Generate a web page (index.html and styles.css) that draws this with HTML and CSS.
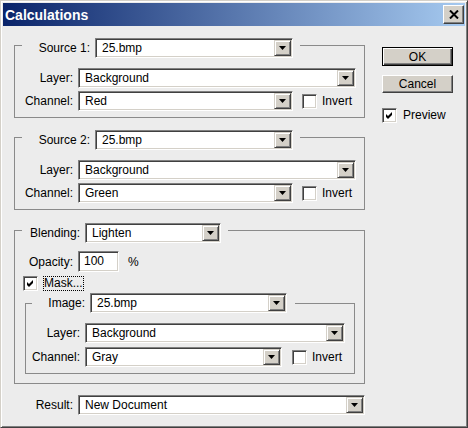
FILE: index.html
```html
<!DOCTYPE html>
<html>
<head>
<meta charset="utf-8">
<title>Calculations</title>
<link rel="stylesheet" href="styles.css">
</head>
<body>
<div class="window">
  <div class="titlebar">
    <span class="title">Calculations</span>
    <span class="close"><svg width="10" height="9" viewBox="0 0 10 9"><path d="M1 0.5 L9 8.5 M9 0.5 L1 8.5" stroke="#000" stroke-width="2"/></svg></span>
  </div>
  <div class="main">
    <div class="left">
      <fieldset class="group g-src">
        <legend class="lg lg-src"><span class="lbl l-src">Source 1:</span><div class="combo w-src"><span class="val">25.bmp</span><span class="dd"><svg width="7" height="4" viewBox="0 0 7 4"><path d="M0 0H7L3.5 4Z"/></svg></span></div></legend>
        <div class="rows">
          <span class="lbl">Layer:</span>
          <div class="combo w-layer"><span class="val">Background</span><span class="dd"><svg width="7" height="4" viewBox="0 0 7 4"><path d="M0 0H7L3.5 4Z"/></svg></span></div>
          <span class="lbl">Channel:</span>
          <div class="line"><div class="combo w-chan"><span class="val">Red</span><span class="dd"><svg width="7" height="4" viewBox="0 0 7 4"><path d="M0 0H7L3.5 4Z"/></svg></span></div><span class="chk"></span><span class="chk-text">Invert</span></div>
        </div>
      </fieldset>

      <fieldset class="group g-src">
        <legend class="lg lg-src"><span class="lbl l-src">Source 2:</span><div class="combo w-src"><span class="val">25.bmp</span><span class="dd"><svg width="7" height="4" viewBox="0 0 7 4"><path d="M0 0H7L3.5 4Z"/></svg></span></div></legend>
        <div class="rows">
          <span class="lbl">Layer:</span>
          <div class="combo w-layer"><span class="val">Background</span><span class="dd"><svg width="7" height="4" viewBox="0 0 7 4"><path d="M0 0H7L3.5 4Z"/></svg></span></div>
          <span class="lbl">Channel:</span>
          <div class="line"><div class="combo w-chan"><span class="val">Green</span><span class="dd"><svg width="7" height="4" viewBox="0 0 7 4"><path d="M0 0H7L3.5 4Z"/></svg></span></div><span class="chk"></span><span class="chk-text">Invert</span></div>
        </div>
      </fieldset>

      <fieldset class="group g-blend">
        <legend class="lg lg-blend"><span class="lbl l-blend">Blending:</span><div class="combo w-blend"><span class="val">Lighten</span><span class="dd"><svg width="7" height="4" viewBox="0 0 7 4"><path d="M0 0H7L3.5 4Z"/></svg></span></div></legend>
        <div class="rows">
          <span class="lbl">Opacity:</span>
          <div class="line"><div class="field w-op">100</div><span class="pct">%</span></div>
        </div>
        <div class="maskrow">
          <span class="chk"><svg width="7" height="7" viewBox="0 0 7 7"><path d="M0 2 L2 4 L6 0 L6 3 L2 7 L0 5 Z"/></svg></span>
          <span class="focus">Mask...</span>
        </div>
        <fieldset class="group g-inner">
          <legend class="lg lg-img"><span class="lbl l-img">Image:</span><div class="combo w-img"><span class="val">25.bmp</span><span class="dd"><svg width="7" height="4" viewBox="0 0 7 4"><path d="M0 0H7L3.5 4Z"/></svg></span></div></legend>
          <div class="rows rows-in">
            <span class="lbl">Layer:</span>
            <div class="combo w-ilayer"><span class="val">Background</span><span class="dd"><svg width="7" height="4" viewBox="0 0 7 4"><path d="M0 0H7L3.5 4Z"/></svg></span></div>
            <span class="lbl">Channel:</span>
            <div class="line line-in"><div class="combo w-ichan"><span class="val">Gray</span><span class="dd"><svg width="7" height="4" viewBox="0 0 7 4"><path d="M0 0H7L3.5 4Z"/></svg></span></div><span class="chk"></span><span class="chk-text">Invert</span></div>
          </div>
        </fieldset>
      </fieldset>

      <div class="rows result">
        <span class="lbl">Result:</span>
        <div class="combo w-result"><span class="val">New Document</span><span class="dd"><svg width="7" height="4" viewBox="0 0 7 4"><path d="M0 0H7L3.5 4Z"/></svg></span></div>
      </div>
    </div>

    <div class="right">
      <div class="pbtn def">OK</div>
      <div class="pbtn cancel">Cancel</div>
      <div class="chkrow">
        <span class="chk"><svg width="7" height="7" viewBox="0 0 7 7"><path d="M0 2 L2 4 L6 0 L6 3 L2 7 L0 5 Z"/></svg></span>
        <span class="chk-text">Preview</span>
      </div>
    </div>
  </div>
</div>
</body>
</html>
```

FILE: styles.css
```css
* { box-sizing: border-box; }
html, body { margin: 0; padding: 0; }
body {
  background: #ececec;
  font-family: "Liberation Sans", Arial, sans-serif;
  font-size: 12px;
  color: #000;
}
.window {
  width: 468px;
  height: 428px;
  background: #ececec;
  border: 1px solid;
  border-color: #d4d0c8 #404040 #404040 #d4d0c8;
  box-shadow: inset 1px 1px 0 #fff, inset -1px -1px 0 #808080;
  padding: 2px;
  display: flex;
  flex-direction: column;
}
.titlebar {
  height: 23px;
  flex: none;
  display: flex;
  align-items: center;
  justify-content: space-between;
  padding: 0 1px 0 2px;
  background: linear-gradient(90deg, #0a246a, #a6caf0);
}
.title {
  color: #fff;
  font-weight: bold;
  font-size: 14px;
}
.close {
  width: 21px;
  height: 19px;
  background: #d4d0c8;
  border: 1px solid;
  border-color: #fff #404040 #404040 #fff;
  box-shadow: inset -1px -1px 0 #808080;
  display: flex;
  align-items: center;
  justify-content: center;
}
.main {
  display: flex;
  align-items: flex-start;
  padding: 12px 0 0 11px;
}
.left {
  width: 351px;
  display: flex;
  flex-direction: column;
}
.right {
  width: 71px;
  margin-left: 17px;
  margin-top: 9px;
  display: flex;
  flex-direction: column;
}

/* group boxes */
.group {
  margin: 0 0 12px 0;
  padding: 15px 0 6px 0;
  border: 1px solid #8a8a8a;
  min-width: 0;
}
.g-blend {
  margin-top: 1px;
  margin-bottom: 11px;
  padding: 13px 0 9px 0;
}
.g-inner {
  margin: 2px 0 0 10px;
  width: 330px;
  padding: 10px 0 6px 0;
}
.lg {
  display: flex;
  align-items: flex-start;
  height: 15px;
  margin-left: 7px;
  padding: 0 7px 0 15px;
}
.lg-blend { padding-left: 8px; }
.lg-img {
  height: 20px;
  margin-left: 6px;
  padding: 0 8px 0 16px;
}
.lbl {
  line-height: 20px;
  white-space: nowrap;
}
.lg .lbl {
  text-align: right;
  margin-right: 5px;
}
.l-src { width: 53px; }
.l-blend { width: 50px; margin-right: 4px; }
.l-img { width: 37px; }

.rows {
  display: grid;
  grid-template-columns: 58px auto;
  column-gap: 5px;
  row-gap: 3px;
  align-items: center;
  justify-items: start;
}
.rows .lbl { justify-self: end; }
.rows-in {
  grid-template-columns: 54px auto;
  row-gap: 4px;
}
.result {
  padding-left: 1px;
}

.line {
  display: flex;
  align-items: center;
}
.line .chk { margin-left: 9px; }
.line-in .chk { margin-left: 10px; }
.chk-text { margin-left: 5px; line-height: 15px; }

/* combo boxes */
.combo {
  height: 20px;
  display: flex;
  align-items: center;
  background: #fff;
  border: 1px solid;
  border-color: #808080 #fff #fff #808080;
  box-shadow: inset 1px 1px 0 #404040, inset -1px -1px 0 #d4d0c8;
  padding: 1px;
}
.val {
  flex: 1;
  padding-left: 5px;
  white-space: nowrap;
  overflow: hidden;
}
.dd {
  flex: none;
  width: 17px;
  height: 16px;
  background: #d4d0c8;
  border: 1px solid;
  border-color: #d4d0c8 #404040 #404040 #d4d0c8;
  box-shadow: inset 1px 1px 0 #fff, inset -1px -1px 0 #808080;
  display: flex;
  align-items: center;
  justify-content: center;
}
.dd svg { fill: #000; }
.w-src { width: 198px; }
.w-layer { width: 278px; }
.w-chan { width: 215px; }
.w-blend { width: 136px; }
.w-img { width: 197px; }
.w-ilayer { width: 260px; }
.w-ichan { width: 197px; }
.w-result { width: 287px; }

.field {
  height: 21px;
  background: #fff;
  border: 1px solid;
  border-color: #808080 #fff #fff #808080;
  box-shadow: inset 1px 1px 0 #404040, inset -1px -1px 0 #d4d0c8;
  padding-left: 5px;
  line-height: 19px;
}
.w-op { width: 41px; }
.pct { margin-left: 9px; }

.chk {
  flex: none;
  width: 15px;
  height: 15px;
  background: #fff;
  border: 1px solid;
  border-color: #808080 #fff #fff #808080;
  box-shadow: inset 1px 1px 0 #404040, inset -1px -1px 0 #d4d0c8;
  display: flex;
  align-items: center;
  justify-content: center;
}
.chk svg { fill: #000; }

.maskrow {
  display: flex;
  align-items: center;
  height: 15px;
  margin: 4px 0 0 8px;
}
.focus {
  margin-left: 5px;
  border: 1px dotted #000;
  line-height: 13px;
  padding: 0;
}

/* push buttons */
.pbtn {
  width: 71px;
  height: 18px;
  display: flex;
  align-items: center;
  justify-content: center;
  background: #d4d0c8;
  border: 1px solid;
  border-color: #fff #404040 #404040 #fff;
  box-shadow: inset -1px -1px 0 #808080;
}
.pbtn.def {
  height: 19px;
  border-color: #000;
  box-shadow: inset 1px 1px 0 #fff, inset -1px -1px 0 #404040, inset -2px -2px 0 #808080;
}
.pbtn.cancel { margin-top: 9px; }
.chkrow {
  display: flex;
  align-items: center;
  margin-top: 15px;
}
.chkrow .chk-text { margin-left: 6px; }
```
